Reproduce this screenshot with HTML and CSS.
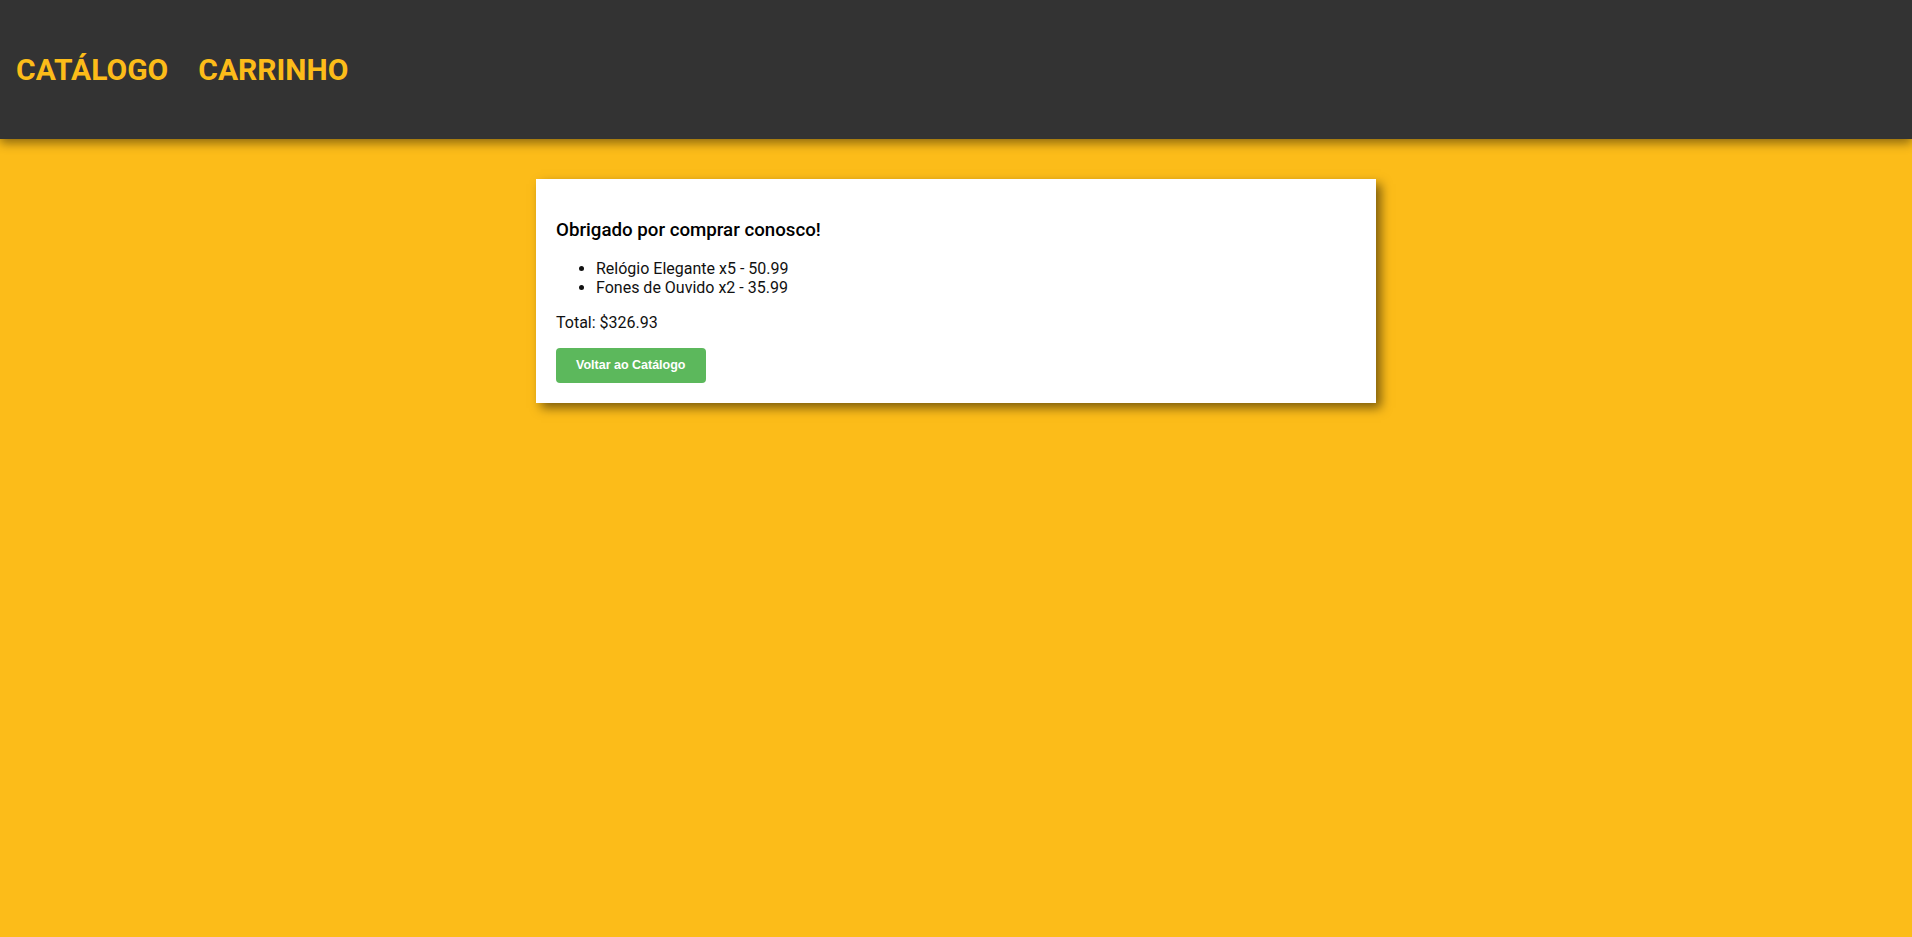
FILE: index.html
```html
<!DOCTYPE html>
<html lang="pt">
<head>
<meta charset="utf-8">
<title>Loja</title>
<link rel="stylesheet" href="styles.css">
</head>
<body>
<header class="topbar">
  <nav class="nav">
    <a class="nav-link" href="#">CATÁLOGO</a>
    <a class="nav-link" href="#">CARRINHO</a>
  </nav>
</header>
<main class="main">
  <section class="card">
    <h3 class="card-title">Obrigado por comprar conosco!</h3>
    <ul class="items">
      <li>Relógio Elegante x5 - 50.99</li>
      <li>Fones de Ouvido x2 - 35.99</li>
    </ul>
    <p class="total">Total: $326.93</p>
    <button class="btn" type="button">Voltar ao Catálogo</button>
  </section>
</main>
</body>
</html>
```

FILE: styles.css
```css
html, body {
  margin: 0;
  padding: 0;
}
body {
  background: #fcbc19;
  font-family: Roboto, "Liberation Sans", Arial, sans-serif;
  min-height: 937px;
}
.topbar {
  background: #333333;
  height: 139px;
  display: flex;
  align-items: center;
  padding: 0 16px;
  box-shadow: 0 4px 10px rgba(0, 0, 0, 0.45);
  position: relative;
  z-index: 1;
}
.nav {
  display: flex;
  gap: 30px;
}
.nav-link {
  color: #fcbc19;
  text-decoration: none;
  font-size: 30px;
  font-weight: 700;
  line-height: 36px;
}
.main {
  display: flex;
  justify-content: center;
  padding-top: 40px;
}
.card {
  width: 840px;
  box-sizing: border-box;
  background: #fff;
  padding: 20px;
  box-shadow: 5px 5px 10px rgba(0, 0, 0, 0.5);
}
.card-title {
  font-size: 18.72px;
  font-weight: 500;
  color: #000;
  margin: 19.5px 0 18.5px;
}
.items {
  margin: 0 0 16px;
  padding-left: 40px;
  font-size: 16px;
  color: #111;
}
.total {
  margin: 0 0 16px;
  font-size: 16px;
  color: #111;
}
.btn {
  display: block;
  background: #5cb85c;
  color: #fff;
  border: none;
  border-radius: 4px;
  padding: 10px 20px;
  font-family: Arial, "Liberation Sans", sans-serif;
  font-size: 12.5px;
  line-height: 15px;
  font-weight: 700;
  cursor: pointer;
}
```
